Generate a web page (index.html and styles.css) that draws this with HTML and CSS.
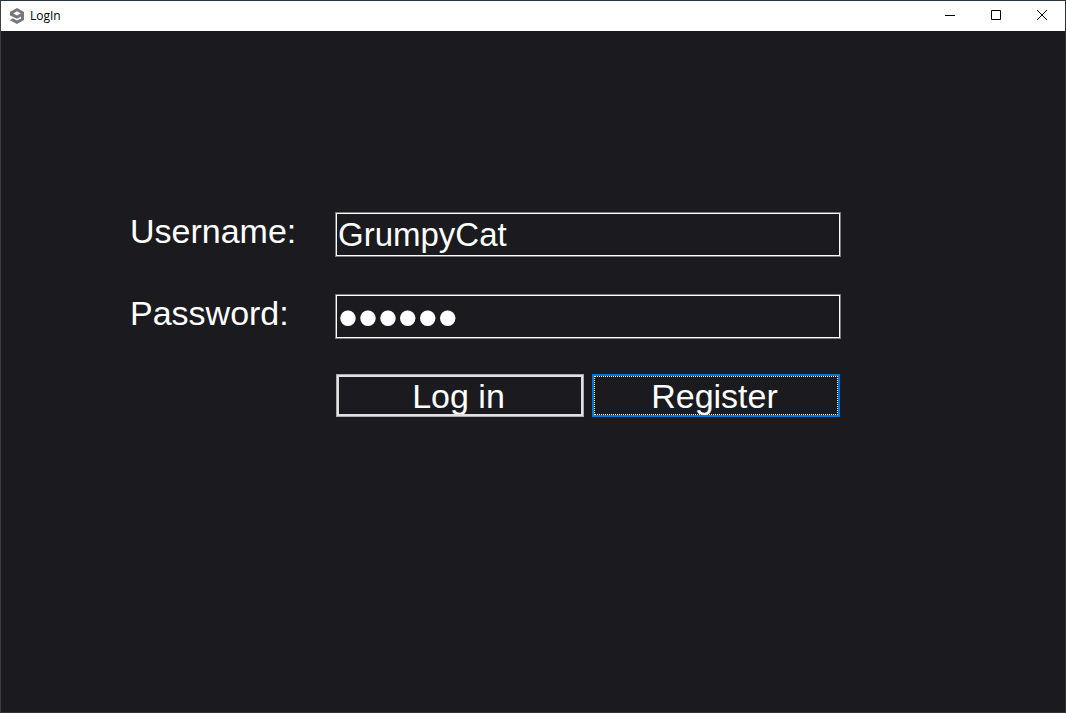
FILE: index.html
```html
<!DOCTYPE html>
<html lang="en">
<head>
<meta charset="utf-8">
<title>LogIn</title>
<link rel="stylesheet" href="styles.css">
</head>
<body>
<div class="window">
  <header class="titlebar">
    <svg class="logo" viewBox="0 0 14 16" aria-hidden="true"><path fill-rule="evenodd" d="M7 0L14 4V12L7 16L0 12.200L2.800 10.300L7 12.600L11 10.400V8.600L7 10.800L0 7.500V4ZM7 3.300L3.200 5.500L7 7.600L10.800 5.500Z" /></svg>
    <h1 class="title">LogIn</h1>
    <button class="control" type="button" aria-label="Minimize"><svg viewBox="0 0 10 10"><path d="M0 5.500H10" /></svg></button>
    <button class="control" type="button" aria-label="Maximize"><svg viewBox="0 0 10 10"><path d="M.5 .5H9.500V9.500H.5Z" /></svg></button>
    <button class="control" type="button" aria-label="Close"><svg viewBox="0 0 10 10"><path d="M0 0L10 10M10 0L0 10" /></svg></button>
  </header>
  <main class="content">
    <form class="form">
      <label class="label" for="username">Username:</label>
      <input class="field" id="username" type="text" value="GrumpyCat">
      <label class="label" for="password">Password:</label>
      <input class="field field-password" id="password" type="password" value="catcat">
      <div class="actions">
        <button class="button" type="button">Log in</button>
        <button class="button button-active" type="button">Register</button>
      </div>
    </form>
  </main>
</div>
</body>
</html>
```

FILE: styles.css
```css
* {
  box-sizing: border-box;
}

body {
  margin: 0;
  font-family: "Liberation Sans", Arial, sans-serif;
  background: #1b1a1e;
  color: #fff;
}

.window {
  display: flex;
  flex-direction: column;
  min-height: 100vh;
  border: 1px solid;
  border-color: #26343c #303336 #303336 #46393c;
}

.titlebar {
  display: flex;
  align-items: center;
  height: 30px;
  padding-left: 9px;
  background: #fff;
  color: #000;
}

.logo {
  width: 14px;
  height: 16px;
  margin-right: 6px;
  fill: #777;
}

.title {
  flex: 1;
  margin: 0;
  font: 12px/16px "Open Sans", "Noto Sans", sans-serif;
}

.control {
  display: grid;
  place-items: center;
  width: 46px;
  height: 30px;
  padding: 0 0 2px;
  border: 0;
  background: none;
}

.control svg {
  width: 10px;
  height: 10px;
  overflow: visible;
  fill: none;
  stroke: #000;
  stroke-width: 1;
}

.content {
  flex: 1;
  padding: 181px 224px 40px 129px;
}

.form {
  display: grid;
  grid-template-columns: 205px 1fr;
  row-gap: 37px;
}

.label {
  font-size: 34px;
  line-height: 38px;
}

.field {
  width: 100%;
  height: 45px;
  padding: 0 1px;
  border: 2px solid #fff;
  border-radius: 0;
  outline: 1px solid #7a7a7a;
  outline-offset: -1px;
  background: none;
  color: #fff;
  font: 33px/40px "Liberation Sans", Arial, sans-serif;
}

.field-password {
  font-size: 57px;
}

.actions {
  grid-column: 2;
  display: grid;
  grid-template-columns: 1fr 1fr;
  gap: 8px;
  padding: 0 1px;
  margin-top: -2px;
}

.button {
  height: 43px;
  padding: 0 3px 0 0;
  border: 3px solid #e1e1e1;
  outline: 1px solid #adadad;
  outline-offset: -1px;
  overflow: clip;
  background: none;
  color: #fff;
  font: 34px/38px "Liberation Sans", Arial, sans-serif;
}

.button-active {
  border: 2px solid #0078d7;
  outline: 1px dotted #fff;
  outline-offset: -3px;
}
```
